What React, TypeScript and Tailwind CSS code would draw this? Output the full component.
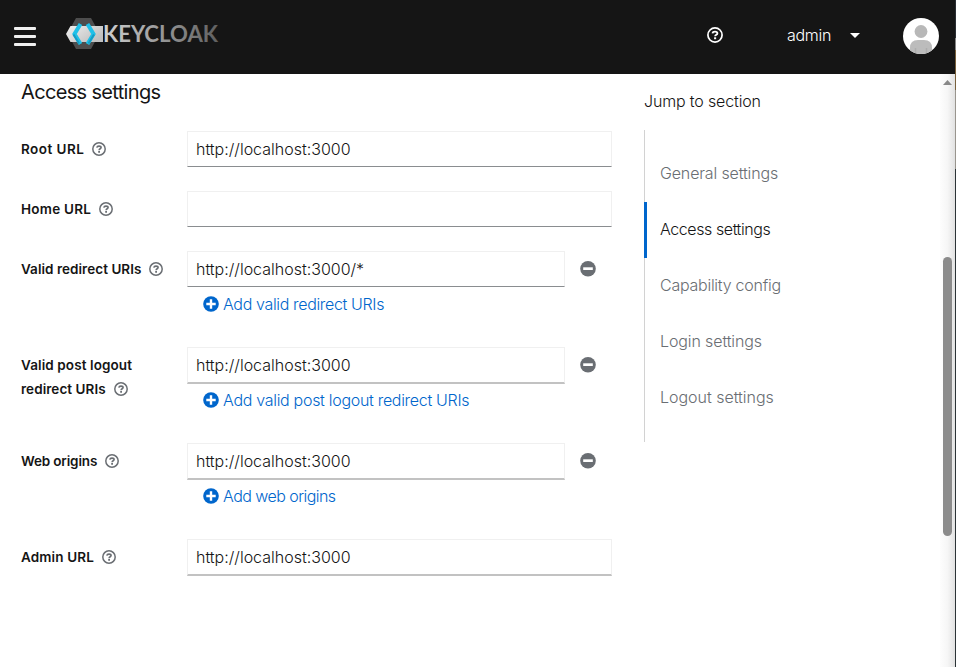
import React from 'react';

const Help = ({ className = '', size = 14 }: { className?: string; size?: number }) => (
  <svg width={size} height={size} viewBox="0 0 14 14" fill="none" stroke="currentColor" className={'shrink-0 ' + className}>
    <circle cx="7" cy="7" r="6.2" strokeWidth="1.5" />
    <path d="M4.800 5.600C5 4.500 6 4.100 7 4.100c1.300 0 2.100.6 2.100 1.500C9.100 6.900 7.100 6.700 7.100 8.200" strokeWidth="1.600" />
    <path d="M7.100 9v1.700" strokeWidth="1.800" />
  </svg>
);

const Plus = () => (
  <svg width="16" height="16" viewBox="0 0 16 16" className="shrink-0">
    <circle cx="8" cy="8" r="7.800" fill="#06c" />
    <path d="M8 3.300v9.400M3.300 8h9.400" stroke="#fff" strokeWidth="2.400" />
  </svg>
);

const Minus = () => (
  <svg width="16" height="16" viewBox="0 0 16 16" className="ml-[15px] mt-[10px] shrink-0">
    <circle cx="8" cy="7.800" r="7.800" fill="#6a6e73" />
    <rect x="3.200" y="6.300" width="9.600" height="2.700" fill="#fff" />
  </svg>
);

const Logo = () => (
  <svg width="154" height="32" viewBox="0 0 154 32">
    <defs>
      <linearGradient id="word" x1="38" x2="152" y1="0" y2="0" gradientUnits="userSpaceOnUse">
        <stop offset="0" stopColor="#d0d0d0" />
        <stop offset="1" stopColor="#606060" />
      </linearGradient>
      <linearGradient id="band" x1="0" x2="1" y1="0" y2="0.6">
        <stop offset="0" stopColor="#f0f0f0" />
        <stop offset="1" stopColor="#c0c0c0" />
      </linearGradient>
    </defs>
    <path d="M10 0h15l8.500 15.500L25 31H10L1.500 15.500z" fill="#4d4d4d" />
    <path d="M4.500 8H37v16H4.500L0 16z" fill="url(#band)" />
    <path d="M14.500 6 8.500 16l6 10" fill="none" stroke="#1fc0e8" strokeWidth="4" />
    <path d="m21.500 6 6 10-6 10" fill="none" stroke="#1fc0e8" strokeWidth="4" />
    <path d="M7.500 16.500l5.500 9M28 16.500l-5.500 9" fill="none" stroke="#159cc4" strokeWidth="2" />
    <text x="37" y="24" fontSize="22" fontWeight="700" fill="url(#word)" textLength="115" lengthAdjust="spacingAndGlyphs" className="font-[Lato,sans-serif]">KEYCLOAK</text>
  </svg>
);

const Field = ({ label, value, add, removable, light, labelClass, addClass, className, second }: {
  label: string; value: string; add?: string; removable?: boolean; light?: boolean;
  labelClass: string; addClass?: string; className: string; second?: string;
}) => (
  <div className={'flex items-start ' + className}>
    <div className="w-[166px] shrink-0 pt-[6px] text-[13.5px] leading-6 font-[560] text-[#151515]">
      {second && <div className="tracking-[0.1px]">{label}</div>}
      <div className="flex items-center">
        <span className={'whitespace-nowrap ' + labelClass}>{second || label}</span>
        <Help className="ml-2 text-[#6a6e73]" />
      </div>
    </div>
    <div>
      <div className={'flex ' + (light ? 'h-[37px]' : 'h-9')}>
        <div className={'h-full border border-[#f0f0f0] pl-2 text-[16px] leading-[35px] font-[350] tracking-[0px] ' + (removable ? 'w-[378px] ' : 'w-[425px] ') + (light ? 'border-b-2 border-b-[#c2c2c2]' : 'border-b-[#8a8d90]')}>{value}</div>
        {removable && <Minus />}
      </div>
      {add && (
        <div className={'flex items-center pl-4 text-[16px] font-[350] text-[#06c] ' + (light ? 'h-[32px]' : 'h-[34px]')}>
          <Plus />
          <span className={'ml-1 whitespace-nowrap ' + addClass}>{add}</span>
        </div>
      )}
    </div>
  </div>
);

export default function App() {
  return (
    <div className="flex h-[667px] w-[956px] overflow-hidden bg-white font-[Inter,sans-serif] text-[#151515]">
      <div className="flex w-[955px] flex-col">
        <header className="flex h-[74px] shrink-0 items-start bg-[#151515] text-white">
          <div className="ml-[14px] mt-[27px] flex w-[22px] flex-col gap-[5px]">
            <i className="h-[3px] rounded-[1px] bg-[#f0f0f0]" />
            <i className="h-[3px] rounded-[1px] bg-[#f0f0f0]" />
            <i className="h-[3px] rounded-[1px] bg-[#f0f0f0]" />
          </div>
          <div className="ml-[30px] mt-[18px] w-[154px]"><Logo /></div>
          <Help size={16} className="ml-[487px] mt-[27px]" />
          <span className="ml-[64px] mt-[23px] w-[44px] text-[16px] leading-6 font-[350] tracking-[-0.3px]">admin</span>
          <svg width="10" height="5" className="ml-[19px] mt-[33px]"><path d="M0 0h10L5 5z" fill="#fff" /></svg>
          <svg width="36" height="36" viewBox="0 0 36 36" className="ml-[43px] mt-[18px]">
            <clipPath id="avatar"><circle cx="18" cy="18" r="18" /></clipPath>
            <g clipPath="url(#avatar)">
              <rect width="36" height="36" fill="#fff" />
              <circle cx="18" cy="13.500" r="6.400" fill="#b8b8b8" />
              <path d="M7 36v-6q0-8 8-8h6q8 0 8 8v6z" fill="#bcbcbc" />
              <path d="M12.500 30v6M23.500 30v6" stroke="#adadad" strokeWidth="1.500" />
            </g>
          </svg>
        </header>
        <div className="flex flex-1">
          <main className="w-[623px] pl-[21px]">
            <h1 className="mt-1 h-[53px] text-[20px] leading-7 font-[430] tracking-[-0.66px]">Access settings</h1>
            <Field label="Root URL" value="http://localhost:3000" className="h-[60px]" labelClass="tracking-[0.45px]" />
            <Field label="Home URL" value="" className="h-[60px]" labelClass="tracking-[0.25px]" />
            <Field label="Valid redirect URIs" value="http://localhost:3000/*" add="Add valid redirect URIs" removable className="h-[96px]" labelClass="tracking-[0.04px]" addClass="tracking-[-0.35px]" />
            <Field label="Valid post logout" second="redirect URIs" value="http://localhost:3000" add="Add valid post logout redirect URIs" removable light className="h-[96px]" labelClass="tracking-[0.06px]" addClass="tracking-[-0.3px]" />
            <Field label="Web origins" value="http://localhost:3000" add="Add web origins" removable light className="h-[96px]" labelClass="tracking-[-0.15px]" addClass="tracking-[-0.55px]" />
            <Field label="Admin URL" value="http://localhost:3000" light className="h-[60px]" labelClass="tracking-[0.13px]" />
          </main>
          <nav className="ml-[21px] w-[296px] pt-[15px] text-[16px] leading-6 font-[350]">
            <div className="tracking-[-0.15px]">Jump to section</div>
            <div className="mt-[17px] h-[312px] border-l border-[#d2d2d2] pt-4 text-[#6a6e73]">
              <div className="h-14 py-[15px] pl-[15px] tracking-[-0.15px]">General settings</div>
              <div className="-ml-px h-14 border-l-3 border-[#06c] py-[15px] pl-[13px] tracking-[-0.42px] text-[#151515]">Access settings</div>
              <div className="h-14 py-[15px] pl-[15px] tracking-[-0.25px]">Capability config</div>
              <div className="h-14 py-[15px] pl-[15px] tracking-[-0.12px]">Login settings</div>
              <div className="h-14 py-[15px] pl-[15px] tracking-[-0.02px]">Logout settings</div>
            </div>
          </nav>
          <div className="flex w-[15px] flex-col items-center bg-gradient-to-r from-[#fdfdfd] via-[#f6f6f6] to-[#e2e2e2]">
            <svg width="9" height="5" className="mt-[6px]"><path d="M4.500 0 9 5H0z" fill="#888" /></svg>
            <div className="mt-[172px] h-[279px] w-[9px] rounded-full bg-[#8b8b8b]" />
          </div>
        </div>
      </div>
      <div className="flex w-px flex-col bg-[#2b3336]">
        <div className="h-[38px] bg-[#2a2e33]" />
        <div className="h-3 bg-[#858585]" />
        <div className="h-10 bg-[#78603c]" />
        <div className="h-[79px] bg-[#99958e]" />
      </div>
    </div>
  );
}
